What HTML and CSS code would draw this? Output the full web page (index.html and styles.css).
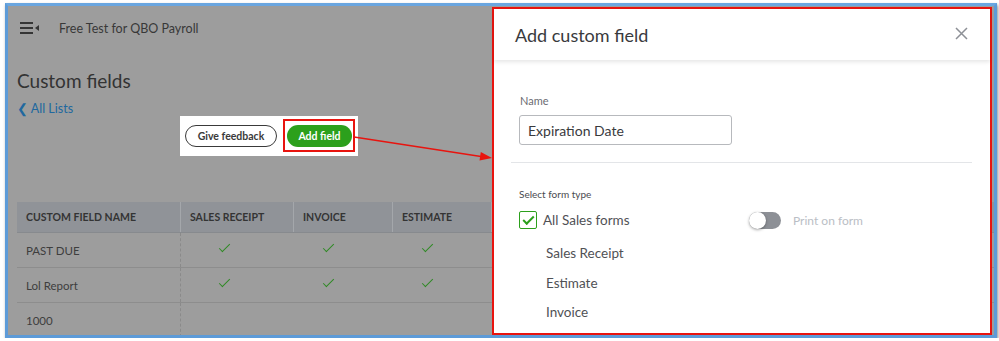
FILE: index.html
```html
<!DOCTYPE html>
<html lang="en">
<head>
    <meta charset="UTF-8">
    <meta name="viewport" content="width=device-width, initial-scale=1.0">
    <title>Custom fields</title>
    <link rel="stylesheet" href="styles.css">
</head>
<body>
    <div class="window">
        <div class="page">
            <div class="topbar">
                <svg class="menu-icon" width="20" height="12" viewBox="0 0 20 12">
                    <rect x="0" y="0" width="13" height="2" fill="#353535"/>
                    <rect x="0" y="5" width="13" height="2" fill="#353535"/>
                    <rect x="0" y="10" width="13" height="2" fill="#353535"/>
                    <polygon points="15,6 19,3 19,9" fill="#353535"/>
                </svg>
                <span class="company">Free Test for QBO Payroll</span>
            </div>

            <h1>Custom fields</h1>

            <div class="sub-row">
                <a class="back-link" href="#">&#10094; All Lists</a>
                <div class="action-box">
                    <button class="btn-outline">Give feedback</button>
                    <span class="callout">
                        <button class="btn-green">Add field</button>
                    </span>
                </div>
            </div>

            <table class="fields">
                <thead>
                    <tr>
                        <th class="col-name">CUSTOM FIELD NAME</th>
                        <th class="col-form">SALES RECEIPT</th>
                        <th class="col-form2">INVOICE</th>
                        <th class="col-form2">ESTIMATE</th>
                        <th></th>
                    </tr>
                </thead>
                <tbody>
                    <tr>
                        <td>PAST DUE</td>
                        <td class="check first"><span class="tick"></span></td>
                        <td class="check"><span class="tick"></span></td>
                        <td class="check"><span class="tick"></span></td>
                        <td></td>
                    </tr>
                    <tr>
                        <td>Lol Report</td>
                        <td class="check first"><span class="tick"></span></td>
                        <td class="check"><span class="tick"></span></td>
                        <td class="check"><span class="tick"></span></td>
                        <td></td>
                    </tr>
                    <tr>
                        <td>1000</td>
                        <td></td>
                        <td></td>
                        <td></td>
                        <td></td>
                    </tr>
                </tbody>
            </table>
        </div>

        <svg class="arrow" width="986" height="329" viewBox="0 0 986 329">
            <line x1="346" y1="131" x2="473" y2="150.5" stroke="#e8140f" stroke-width="1.3"/>
            <polygon points="484,152 471.5,154.6 472.8,146" fill="#e8140f"/>
        </svg>

        <div class="modal">
            <div class="modal-header">
                <h2>Add custom field</h2>
                <svg class="close" width="13" height="13" viewBox="0 0 13 13">
                    <path d="M1 1 L12 12 M12 1 L1 12" stroke="#8d9096" stroke-width="1.5" fill="none"/>
                </svg>
            </div>
            <div class="modal-body">
                <label class="field-label" for="name">Name</label>
                <input class="text-input" id="name" type="text" value="Expiration Date">
                <hr class="divider">
                <div class="section-label">Select form type</div>
                <div class="option-row">
                    <div class="check-option">
                        <span class="checkbox"><span class="tick tick-box"></span></span>
                        <span>All Sales forms</span>
                    </div>
                    <div class="toggle-option">
                        <span class="toggle"><span class="knob"></span></span>
                        <span>Print on form</span>
                    </div>
                </div>
                <ul class="form-list">
                    <li>Sales Receipt</li>
                    <li>Estimate</li>
                    <li>Invoice</li>
                </ul>
            </div>
        </div>
    </div>
</body>
</html>
```

FILE: styles.css
```css
body {
    margin: 0;
    background-color: #ffffff;
    font-family: Lato, "Open Sans", sans-serif;
}
.window {
    position: relative;
    width: 986px;
    height: 329px;
    margin: 3px 0 0 5px;
    border: 3px solid #5d9bd8;
    border-top-color: #6aa6e0;
    box-shadow: 1px 2px 3px rgba(0,0,0,0.45);
    overflow: hidden;
    background-color: #9d9d9d;
}
.page {
    color: #333;
}
.topbar {
    height: 44px;
    display: flex;
    align-items: center;
    padding-left: 12px;
}
.menu-icon {
    margin-right: 19px;
}
.company {
    font-size: 12.5px;
    color: #383838;
}
h1 {
    margin: 19px 0 0 9px;
    font-size: 19px;
    font-weight: normal;
    line-height: 24px;
    color: #333;
}
.sub-row {
    display: flex;
    align-items: flex-start;
    margin: 8px 0 0 9px;
}
.back-link {
    flex: none;
    width: 163px;
    font-size: 12.5px;
    line-height: 16px;
    color: #20689f;
    text-decoration: none;
}
.action-box {
    display: flex;
    align-items: center;
    margin-top: 15px;
    padding: 3px 3px 4px 5px;
    background-color: #ffffff;
}
.btn-outline,
.btn-green {
    height: 22px;
    border-radius: 11px;
    font-family: Lato, "Open Sans", sans-serif;
    font-size: 10.5px;
    font-weight: bold;
    padding: 0;
    cursor: pointer;
}
.btn-outline {
    width: 92px;
    background-color: #ffffff;
    border: 1.5px solid #3a3a3a;
    color: #3a3a3a;
}
.callout {
    display: flex;
    margin-left: 6px;
    padding: 4px 1px 3px 2px;
    border: 2px solid #e8140f;
}
.btn-green {
    width: 65px;
    background-color: #2ca01c;
    border: none;
    color: #ffffff;
}
.fields {
    margin: 46px 0 0 9px;
    width: 977px;
    border-collapse: collapse;
    table-layout: fixed;
    font-size: 11.5px;
}
.fields th {
    height: 30px;
    background-color: #909398;
    text-align: left;
    font-size: 10.5px;
    font-weight: bold;
    color: #343434;
    padding: 0 9px;
    border-left: 1px solid #a4a7ab;
    border-bottom: 1px solid #878a8e;
}
.fields th:first-child {
    border-left: none;
}
.col-name {
    width: 145px;
}
.col-form {
    width: 94px;
}
.col-form2 {
    width: 80px;
}
.fields td {
    height: 34px;
    padding: 0 9px;
    color: #3e3e3e;
    border-bottom: 1px solid #8d8d8d;
}
.fields td:nth-child(2) {
    border-left: 1px dashed #8a8a8a;
}
.fields td.check {
    vertical-align: top;
    padding: 5px 0 0 29px;
    height: 29px;
}
.fields td.check.first {
    padding-left: 38px;
}
.tick {
    display: inline-block;
    width: 10px;
    height: 4px;
    border-left: 1.5px solid #2f8a25;
    border-bottom: 1.5px solid #2f8a25;
    transform: rotate(-45deg);
}
.arrow {
    position: absolute;
    left: 0;
    top: 0;
    pointer-events: none;
    z-index: 2;
}
.modal {
    position: absolute;
    top: 1px;
    right: 2px;
    bottom: 0;
    width: 500px;
    box-sizing: border-box;
    border: 2px solid #e8140f;
    background-color: #ffffff;
    color: #393a3d;
}
.modal-header {
    height: 51px;
    display: flex;
    align-items: center;
    justify-content: space-between;
    padding: 0 22px 0 21px;
    box-shadow: 0 2px 4px rgba(0,0,0,0.1);
}
.modal-header h2 {
    margin: 0;
    font-size: 18px;
    font-weight: normal;
    color: #393a3d;
}
.close {
    margin-top: -2px;
}
.modal-body {
    padding: 34px 18px 0 25px;
}
.field-label {
    display: block;
    padding-left: 1px;
    font-size: 11px;
    line-height: 14px;
    color: #6b6c72;
}
.text-input {
    display: block;
    margin-top: 7px;
    width: 213px;
    height: 30px;
    box-sizing: border-box;
    padding: 0 8px;
    border: 1px solid #b7b9bd;
    border-radius: 3px;
    font-family: Lato, "Open Sans", sans-serif;
    font-size: 14px;
    color: #393a3d;
}
.divider {
    margin: 17px 0 0 -8px;
    border: none;
    border-top: 1px solid #e3e5e8;
}
.section-label {
    margin-top: 25px;
    font-size: 10px;
    line-height: 13px;
    color: #4a4b4f;
}
.option-row {
    display: flex;
    align-items: center;
    margin-top: 10px;
    height: 18px;
}
.check-option {
    display: flex;
    align-items: center;
    width: 230px;
    font-size: 13.5px;
    color: #505155;
}
.checkbox {
    display: flex;
    align-items: center;
    justify-content: center;
    width: 16px;
    height: 16px;
    margin-right: 6px;
    border: 1px solid #2ca01c;
    border-radius: 2px;
}
.tick-box {
    width: 9px;
    height: 4px;
    margin-top: -3px;
    border-color: #2ca01c;
    border-width: 2px;
}
.toggle-option {
    display: flex;
    align-items: center;
    font-size: 12px;
    color: #babec5;
}
.toggle {
    position: relative;
    width: 32px;
    height: 17px;
    margin-right: 12px;
    border-radius: 9px;
    background-color: #8d9096;
}
.knob {
    position: absolute;
    left: 0;
    top: 0;
    width: 17px;
    height: 17px;
    border-radius: 50%;
    background-color: #ffffff;
    box-shadow: 0 1px 3px rgba(0,0,0,0.35);
}
.form-list {
    list-style: none;
    margin: 10px 0 0 0;
    padding: 0 0 0 27px;
    font-size: 13.5px;
    line-height: 29.5px;
    color: #505155;
}
```
